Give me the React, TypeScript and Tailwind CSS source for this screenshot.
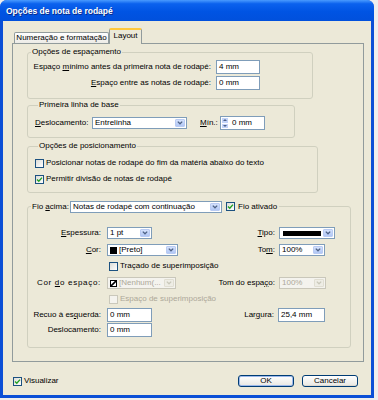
import React from "react";

const Check = ({ color = "#21a121" }: { color?: string }) => (
  <svg width="7" height="7" viewBox="0 0 7 7">
    <path d="M1 3.4 L2.8 5.2 L6 1.6" fill="none" stroke={color} strokeWidth="1.4" />
  </svg>
);

const Checkbox = ({ checked, disabled }: { checked?: boolean; disabled?: boolean }) => (
  <div
    className={
      disabled
        ? "w-[9px] h-[9px] shrink-0 border border-[#cac8bb] bg-[#f4f3ee]"
        : "w-[9px] h-[9px] shrink-0 border border-[#1c5180] bg-[linear-gradient(135deg,#dcdcd7,#ffffff)] flex items-center justify-center"
    }
  >
    {checked && <Check />}
  </div>
);

const Arrow = ({ disabled }: { disabled?: boolean }) => (
  <div
    className={
      disabled
        ? "w-[10px] my-[1px] mr-[1px] rounded-[1px] bg-[#eeede5] border border-[#e0ded2] flex items-center justify-center"
        : "w-[10px] my-[1px] mr-[1px] rounded-[1px] bg-[linear-gradient(180deg,#d4e1fc,#b1c7f5)] border border-[#b9cbf3] flex items-center justify-center"
    }
  >
    <svg width="6" height="4" viewBox="0 0 6 4">
      <path
        d="M0.8 0.6 L3 2.8 L5.2 0.6"
        fill="none"
        stroke={disabled ? "#c9c7ba" : "#4d6185"}
        strokeWidth="1.3"
      />
    </svg>
  </div>
);

type SelectProps = {
  w: string;
  disabled?: boolean;
  children?: React.ReactNode;
};

const Select = ({ w, disabled, children }: SelectProps) => (
  <div
    className={`${w} h-[12px] flex items-stretch border ${
      disabled ? "border-[#c9c7ba] bg-[#f4f3ee] text-[#aca899]" : "border-[#7f9db9] bg-white"
    }`}
  >
    <div className="flex-1 flex items-center gap-[2px] pl-[2px] overflow-hidden whitespace-nowrap">
      {children}
    </div>
    <Arrow disabled={disabled} />
  </div>
);

const Input = ({ w, value }: { w: string; value: string }) => (
  <div className={`${w} h-[14px] flex items-center pl-[2px] border border-[#7f9db9] bg-white`}>
    {value}
  </div>
);

const Button = ({ label, isDefault }: { label: string; isDefault?: boolean }) => (
  <div
    className={`w-[56px] h-[12px] rounded-[3px] border border-[#003c74] flex items-center justify-center bg-[linear-gradient(180deg,#ffffff,#ecebe6_85%,#d6d0c5)] ${
      isDefault ? "shadow-[inset_0_0_0_1px_#9db9eb]" : ""
    }`}
  >
    {label}
  </div>
);

export default function App() {
  return (
    <div className="w-[378px] h-[400px] bg-[#eeeeee] font-['Liberation_Sans',Arial,sans-serif] text-[8px] leading-[10px] text-black">
      <div className="w-[374px] h-[398px] flex flex-col rounded-t-[7px] bg-[#0b4fd6] overflow-hidden">
        {/* title bar */}
        <div className="h-[21px] shrink-0 flex items-center pl-[6px] bg-[linear-gradient(180deg,#4a9bff_0%,#0b62ee_18%,#0054e3_55%,#0150dc_100%)]">
          <span className="text-white font-bold text-[8.5px] leading-[12px] [text-shadow:1px_1px_0_#0a2b88]">
            Opções de nota de rodapé
          </span>
        </div>

        <div className="flex-1 mx-[3px] mb-[3px] bg-[#ece9d8] flex flex-col pl-[9px] pr-[7px]">
          {/* tabs */}
          <div className="h-[15px] mt-[7px] flex items-end pl-[2px]">
            <div className="w-[95px] h-[11px] border border-b-0 border-[#919b9c] rounded-t-[2px] bg-[linear-gradient(180deg,#ffffff,#ecebe6)] flex items-center justify-center whitespace-nowrap">
              Numeração e formatação
            </div>
            <div className="relative z-10 w-[33px] h-[16px] -mb-px border-x border-[#919b9c] border-t-[2px] border-t-[#ffc83c] rounded-t-[2px] bg-[#ece9d8] flex items-center justify-center pb-[2px]">
              Layout
            </div>
          </div>

          {/* tab panel */}
          <div className="h-[319px] border border-[#919b9c] bg-[#ece9d8] pt-[3px] pl-[14px]">
            {/* Opções de espaçamento */}
            <fieldset className="w-[286px] border border-[#d0d0bf] rounded-[3px] pt-[3px] pb-[8px]">
              <legend className="ml-[3px] px-[1px] leading-[10px]">Opções de espaçamento</legend>
              <div className="flex items-center h-[14px]">
                <div className="w-[183px] text-right">
                  Espaço <u>m</u>ínimo antes da primeira nota de rodapé:
                </div>
                <div className="ml-[5px]">
                  <Input w="w-[44px]" value="4 mm" />
                </div>
              </div>
              <div className="flex items-center h-[14px] mt-[2px]">
                <div className="w-[183px] text-right">
                  <u>E</u>spaço entre as notas de rodapé:
                </div>
                <div className="ml-[5px]">
                  <Input w="w-[44px]" value="0 mm" />
                </div>
              </div>
            </fieldset>

            {/* Primeira linha de base */}
            <fieldset className="w-[268px] mt-[1px] border border-[#d0d0bf] rounded-[3px] pt-[6px] pb-[7px] pl-[7px]">
              <legend className="ml-[3px] px-[1px] leading-[10px]">Primeira linha de base</legend>
              <div className="flex items-center h-[14px]">
                <div className="w-[57px]">
                  <u>D</u>eslocamento:
                </div>
                <Select w="w-[95px]">Entrelinha</Select>
                <div className="ml-[13px] w-[20px]">
                  <u>M</u>ín.:
                </div>
                <div className="w-[45px] h-[14px] flex items-center border border-[#7f9db9] bg-white">
                  <div className="w-[6px] h-[10px] ml-[1px] flex flex-col gap-px">
                    <div className="flex-1 bg-[#c3d4fa] flex items-center justify-center">
                      <svg width="4" height="2" viewBox="0 0 4 2">
                        <path d="M0 2 L2 0 L4 2 Z" fill="#4d6185" />
                      </svg>
                    </div>
                    <div className="flex-1 bg-[#c3d4fa] flex items-center justify-center">
                      <svg width="4" height="2" viewBox="0 0 4 2">
                        <path d="M0 0 L2 2 L4 0 Z" fill="#4d6185" />
                      </svg>
                    </div>
                  </div>
                  <span className="ml-[4px]">0 mm</span>
                </div>
              </div>
            </fieldset>

            {/* Opções de posicionamento */}
            <fieldset className="w-[291px] mt-[3px] border border-[#d0d0bf] rounded-[3px] pt-[7px] pb-[8px] pl-[7px]">
              <legend className="ml-[3px] px-[1px] leading-[10px]">Opções de posicionamento</legend>
              <div className="flex items-center h-[10px] gap-[2px]">
                <Checkbox />
                <span>Posicionar notas de rodapé do fim da matéria abaixo do texto</span>
              </div>
              <div className="flex items-center h-[10px] gap-[2px] mt-[6px]">
                <Checkbox checked />
                <span>Permitir divisão de notas de rodapé</span>
              </div>
            </fieldset>

            {/* Fio acima */}
            <fieldset className="w-[324px] mt-[7px] border border-[#d0d0bf] rounded-[3px] pt-[14px] pb-[10px]">
              <legend className="ml-[3px] pl-[1px] pr-[2px]">
                <div className="flex items-center h-[13px]">
                  <div className="w-[38px]">
                    Fio <u>a</u>cima:
                  </div>
                  <Select w="w-[152px]">Notas de rodapé com continuação</Select>
                  <div className="ml-[4px]">
                    <Checkbox checked />
                  </div>
                  <span className="ml-[3px]">Fio ativado</span>
                </div>
              </legend>

              {/* row A */}
              <div className="flex items-center h-[12px]">
                <div className="w-[73px] text-right">
                  <u>E</u>spessura:
                </div>
                <div className="w-[93px] ml-[6px]">
                  <Select w="w-[45px]">1 pt</Select>
                </div>
                <div className="w-[75px] text-right">
                  <u>T</u>ipo:
                </div>
                <div className="ml-[4px]">
                  <Select w="w-[56px]">
                    <div className="w-[38px] h-[5px] bg-black ml-[1px]" />
                  </Select>
                </div>
              </div>

              {/* row B */}
              <div className="flex items-center h-[12px] mt-[5px]">
                <div className="w-[73px] text-right">
                  <u>C</u>or:
                </div>
                <div className="w-[93px] ml-[6px]">
                  <Select w="w-[71px]">
                    <div className="w-[7px] h-[7px] bg-black shrink-0" />
                    <span>[Preto]</span>
                  </Select>
                </div>
                <div className="w-[75px] text-right">
                  To<u>m</u>:
                </div>
                <div className="ml-[4px]">
                  <Select w="w-[46px]">100%</Select>
                </div>
              </div>

              {/* row C */}
              <div className="flex items-center h-[10px] mt-[5px] pl-[81px] gap-[2px]">
                <Checkbox />
                <span>Traçado de superimposição</span>
              </div>

              {/* row D */}
              <div className="flex items-center h-[12px] mt-[6px]">
                <div className="w-[73px] text-right tracking-[0.7px]">
                  Cor <u>d</u>o espaço:
                </div>
                <div className="w-[93px] ml-[6px]">
                  <Select w="w-[69px]" disabled>
                    <svg width="7" height="7" viewBox="0 0 7 7" className="shrink-0">
                      <rect x="0.5" y="0.5" width="6" height="6" fill="#fff" stroke="#000" />
                      <path d="M0.5 6.5 L6.5 0.5" stroke="#000" strokeWidth="1.6" />
                    </svg>
                    <span>[Nenhum(...</span>
                  </Select>
                </div>
                <div className="w-[75px] text-right">
                  Tom do espa<u>ç</u>o:
                </div>
                <div className="ml-[4px]">
                  <Select w="w-[47px]" disabled>
                    100%
                  </Select>
                </div>
              </div>

              {/* row E */}
              <div className="flex items-center h-[10px] mt-[5px] pl-[81px] gap-[2px] text-[#aca899]">
                <Checkbox disabled />
                <span>Espaço de superimposição</span>
              </div>

              {/* row F */}
              <div className="flex items-center h-[14px] mt-[4px]">
                <div className="w-[73px] text-right">
                  Recuo à es<u>q</u>uerda:
                </div>
                <div className="w-[93px] ml-[6px]">
                  <Input w="w-[45px]" value="0 mm" />
                </div>
                <div className="w-[74px] text-right">
                  Lar<u>g</u>ura:
                </div>
                <div className="ml-[4px]">
                  <Input w="w-[47px]" value="25,4 mm" />
                </div>
              </div>

              {/* row G */}
              <div className="flex items-center h-[14px] mt-[1px]">
                <div className="w-[73px] text-right">Deslocamento:</div>
                <div className="ml-[6px]">
                  <Input w="w-[45px]" value="0 mm" />
                </div>
              </div>
            </fieldset>
          </div>

          {/* bottom row */}
          <div className="h-[12px] mt-[13px] flex items-center pl-[1px] pr-[6px]">
            <Checkbox checked />
            <span className="ml-[2px]">Visualizar</span>
            <div className="ml-auto flex gap-[8px]">
              <Button label="OK" isDefault />
              <Button label="Cancelar" />
            </div>
          </div>
        </div>
      </div>
    </div>
  );
}
